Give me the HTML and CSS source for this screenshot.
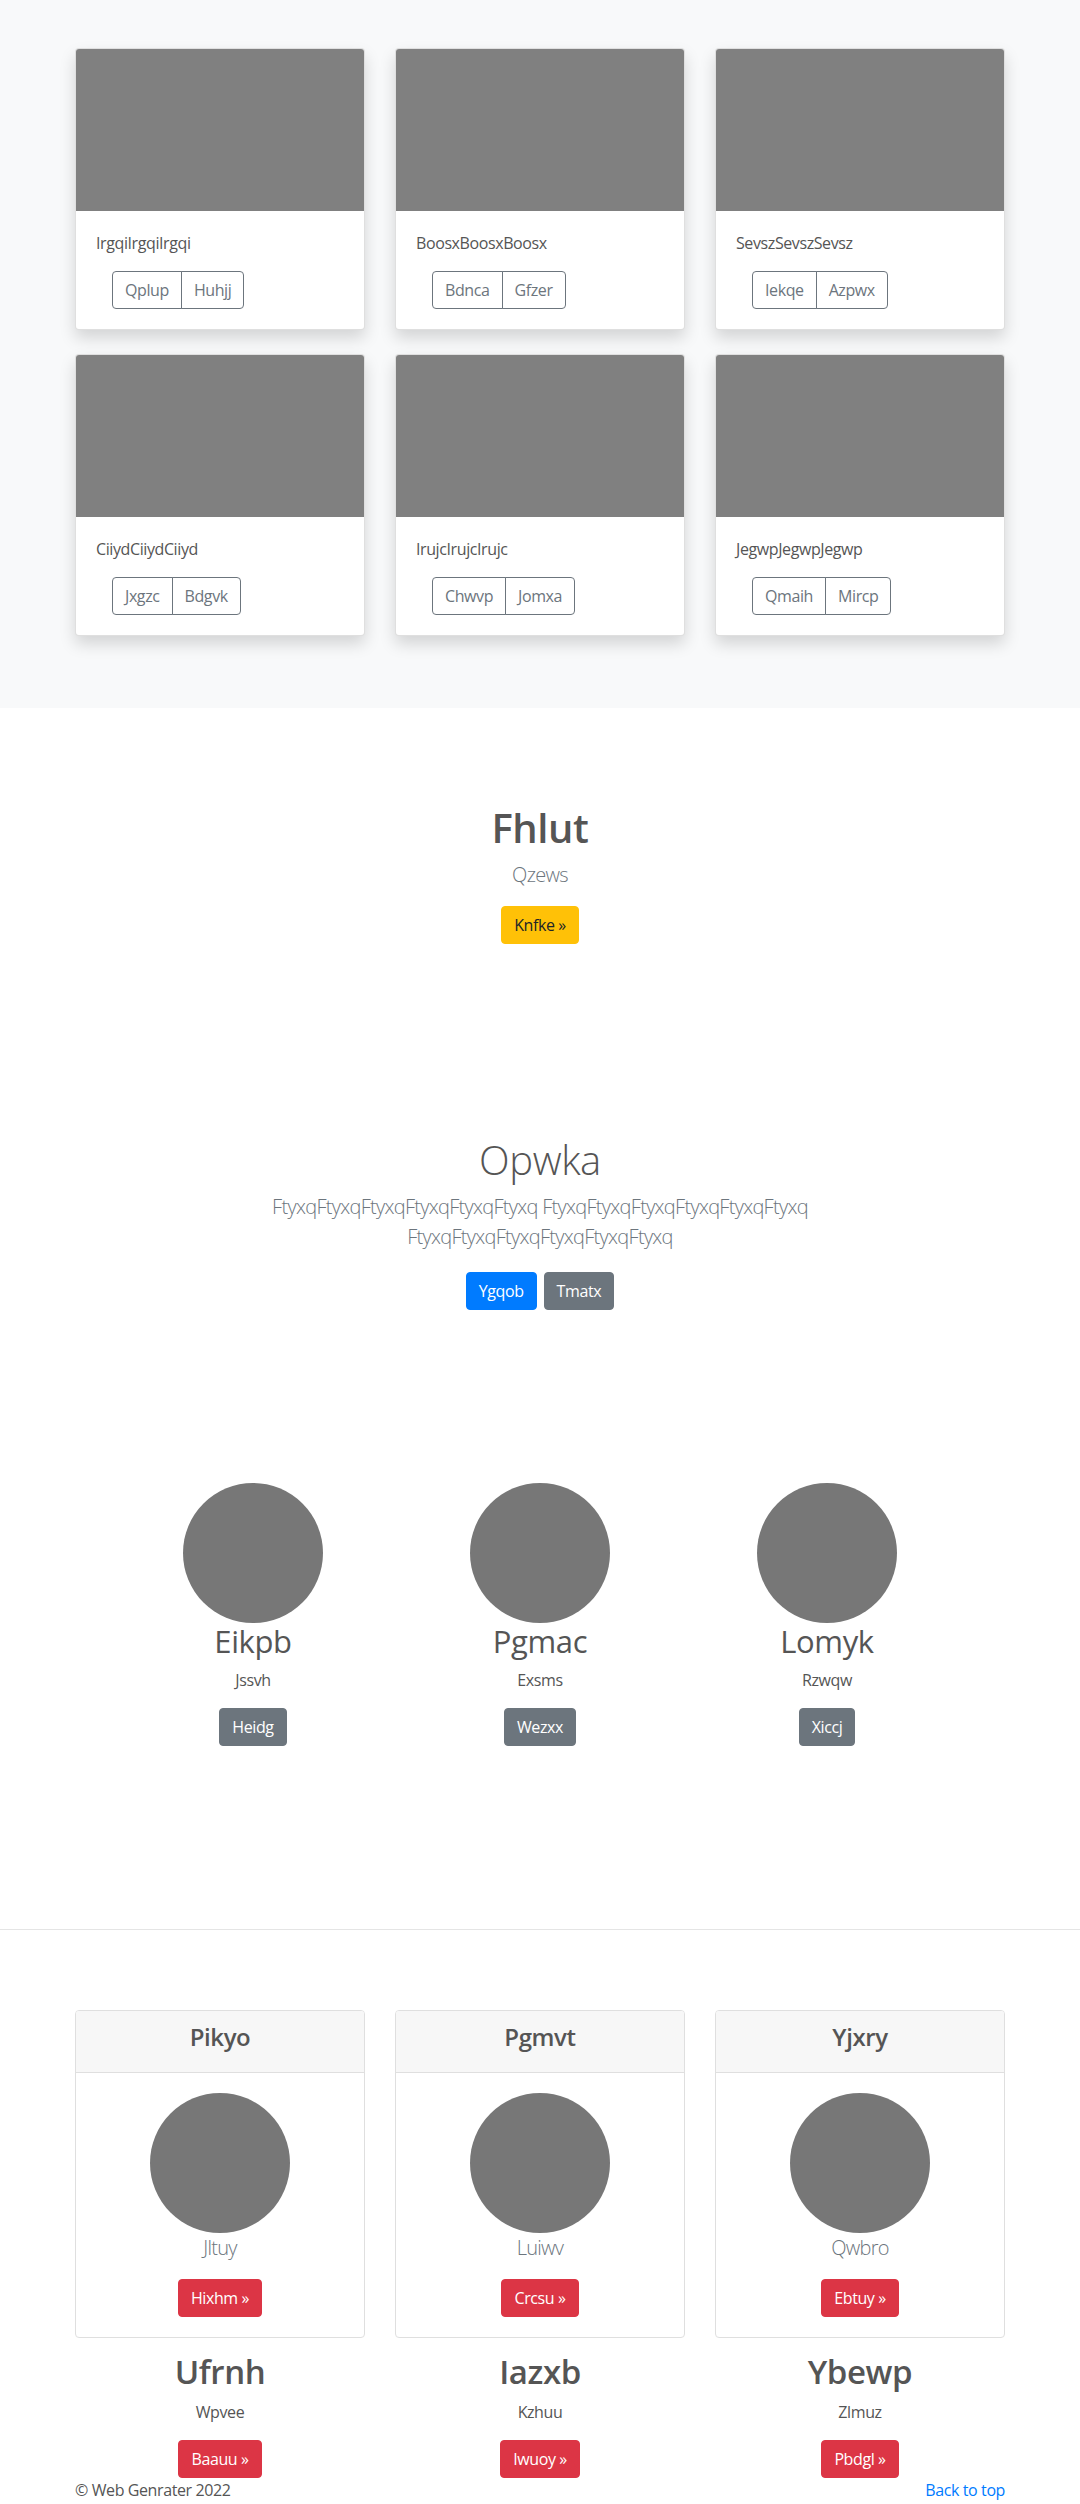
FILE: index.html
```html
<!DOCTYPE html>
<html lang="en">
<head>
<meta charset="utf-8">
<title>Album</title>
<link rel="stylesheet" href="styles.css">
</head>
<body>
<main>
  <section class="album">
    <div class="container">
      <div class="grid3 album-grid">
        <div class="card shadow">
          <div class="card-img"></div>
          <div class="card-body">
            <p class="card-text">IrgqiIrgqiIrgqi</p>
            <div class="btn-group"><a class="btn btn-outline" href="#">Qplup</a><a class="btn btn-outline" href="#">Huhjj</a></div>
          </div>
        </div>
        <div class="card shadow">
          <div class="card-img"></div>
          <div class="card-body">
            <p class="card-text">BoosxBoosxBoosx</p>
            <div class="btn-group"><a class="btn btn-outline" href="#">Bdnca</a><a class="btn btn-outline" href="#">Gfzer</a></div>
          </div>
        </div>
        <div class="card shadow">
          <div class="card-img"></div>
          <div class="card-body">
            <p class="card-text">SevszSevszSevsz</p>
            <div class="btn-group"><a class="btn btn-outline" href="#">Iekqe</a><a class="btn btn-outline" href="#">Azpwx</a></div>
          </div>
        </div>
        <div class="card shadow">
          <div class="card-img"></div>
          <div class="card-body">
            <p class="card-text">CiiydCiiydCiiyd</p>
            <div class="btn-group"><a class="btn btn-outline" href="#">Jxgzc</a><a class="btn btn-outline" href="#">Bdgvk</a></div>
          </div>
        </div>
        <div class="card shadow">
          <div class="card-img"></div>
          <div class="card-body">
            <p class="card-text">IrujcIrujcIrujc</p>
            <div class="btn-group"><a class="btn btn-outline" href="#">Chwvp</a><a class="btn btn-outline" href="#">Jomxa</a></div>
          </div>
        </div>
        <div class="card shadow">
          <div class="card-img"></div>
          <div class="card-body">
            <p class="card-text">JegwpJegwpJegwp</p>
            <div class="btn-group"><a class="btn btn-outline" href="#">Qmaih</a><a class="btn btn-outline" href="#">Mircp</a></div>
          </div>
        </div>
      </div>
    </div>
  </section>

  <section class="hero hero-bold">
    <div class="container">
      <h1>Fhlut</h1>
      <p class="lead">Qzews</p>
      <a class="btn btn-warning" href="#">Knfke »</a>
    </div>
  </section>

  <section class="hero hero-light">
    <div class="container">
      <h1>Opwka</h1>
      <p class="lead lead-wide">FtyxqFtyxqFtyxqFtyxqFtyxqFtyxq FtyxqFtyxqFtyxqFtyxqFtyxqFtyxq FtyxqFtyxqFtyxqFtyxqFtyxqFtyxq</p>
      <div class="actions">
        <a class="btn btn-primary" href="#">Ygqob</a>
        <a class="btn btn-secondary" href="#">Tmatx</a>
      </div>
    </div>
  </section>

  <section class="features">
    <div class="feature">
      <div class="circle"></div>
      <h2>Eikpb</h2>
      <p>Jssvh</p>
      <a class="btn btn-secondary" href="#">Heidg</a>
    </div>
    <div class="feature">
      <div class="circle"></div>
      <h2>Pgmac</h2>
      <p>Exsms</p>
      <a class="btn btn-secondary" href="#">Wezxx</a>
    </div>
    <div class="feature">
      <div class="circle"></div>
      <h2>Lomyk</h2>
      <p>Rzwqw</p>
      <a class="btn btn-secondary" href="#">Xiccj</a>
    </div>
  </section>

  <div class="divider"></div>

  <section class="pricing">
    <div class="container">
      <div class="grid3">
        <div class="pcol">
          <div class="pcard">
            <div class="pcard-header"><h4>Pikyo</h4></div>
            <div class="pcard-body">
              <div class="circle"></div>
              <p class="lead">Jltuy</p>
              <a class="btn btn-danger" href="#">Hixhm »</a>
            </div>
          </div>
          <div class="sub">
            <h2>Ufrnh</h2>
            <p>Wpvee</p>
            <a class="btn btn-danger" href="#">Baauu »</a>
          </div>
        </div>
        <div class="pcol">
          <div class="pcard">
            <div class="pcard-header"><h4>Pgmvt</h4></div>
            <div class="pcard-body">
              <div class="circle"></div>
              <p class="lead">Luiwv</p>
              <a class="btn btn-danger" href="#">Crcsu »</a>
            </div>
          </div>
          <div class="sub">
            <h2>Iazxb</h2>
            <p>Kzhuu</p>
            <a class="btn btn-danger" href="#">Iwuoy »</a>
          </div>
        </div>
        <div class="pcol">
          <div class="pcard">
            <div class="pcard-header"><h4>Yjxry</h4></div>
            <div class="pcard-body">
              <div class="circle"></div>
              <p class="lead">Qwbro</p>
              <a class="btn btn-danger" href="#">Ebtuy »</a>
            </div>
          </div>
          <div class="sub">
            <h2>Ybewp</h2>
            <p>Zlmuz</p>
            <a class="btn btn-danger" href="#">Pbdgl »</a>
          </div>
        </div>
      </div>
    </div>
  </section>
</main>

<footer class="container footer">
  <p>© Web Genrater 2022</p>
  <a href="#">Back to top</a>
</footer>
</body>
</html>
```

FILE: styles.css
```css
* { box-sizing: border-box; }

body {
  margin: 0;
  font-family: "Open Sans", "Noto Sans", sans-serif;
  font-size: 16px;
  line-height: 1.5;
  letter-spacing: -0.025em;
  color: #555;
  background: #fff;
}

h1, h2, h4, p { margin: 0; }

.container {
  width: 960px;
  margin: 0 auto;
  padding: 0 15px;
}

.grid3 {
  display: grid;
  grid-template-columns: repeat(3, 1fr);
  column-gap: 30px;
}

/* Album */
.album {
  background: #f8f9fa;
  padding: 48px 0 72px;
}
.album-grid { row-gap: 24px; }

.card {
  background: #fff;
  border: 1px solid rgba(0, 0, 0, .125);
  border-radius: 4px;
  overflow: hidden;
}
.shadow { box-shadow: 0 .5rem 1rem rgba(0, 0, 0, .15); }
.card-img { height: 162px; background: #808080; }
.card-body { padding: 20px; }
.card-text { margin-bottom: 16px; }

.btn-group {
  display: inline-flex;
  margin-left: 16px;
}

/* Buttons */
.btn {
  display: inline-block;
  font-size: 16px;
  line-height: 24px;
  padding: 6px 12px;
  border: 1px solid transparent;
  border-radius: 4px;
  text-decoration: none;
  white-space: nowrap;
}
.btn-outline {
  color: #6c757d;
  border-color: #6c757d;
  background: transparent;
}
.btn-group .btn:first-child {
  border-top-right-radius: 0;
  border-bottom-right-radius: 0;
}
.btn-group .btn:last-child {
  border-top-left-radius: 0;
  border-bottom-left-radius: 0;
  margin-left: -1px;
}
.btn-warning { background: #ffc107; border-color: #ffc107; color: #212529; }
.btn-primary { background: #007bff; border-color: #007bff; color: #fff; }
.btn-secondary { background: #6c757d; border-color: #6c757d; color: #fff; }
.btn-danger { background: #dc3545; border-color: #dc3545; color: #fff; }

/* Heroes */
.hero {
  text-align: center;
  padding: 96px 0;
}
.hero h1 {
  font-size: 40px;
  line-height: 1.2;
  margin-bottom: 8px;
}
.hero-bold h1 { font-weight: 600; }
.hero-light h1 { font-weight: 300; }
.hero-light { padding-bottom: 173px; }

.lead {
  font-size: 20px;
  font-weight: 300;
  line-height: 30px;
  letter-spacing: -0.035em;
  color: #6c757d;
  margin-bottom: 16px;
}
.lead-wide {
  max-width: 610px;
  margin: 0 auto 16px;
}
.actions {
  display: flex;
  justify-content: center;
  gap: 7px;
  margin-top: 20px;
}

/* Features */
.features {
  display: grid;
  grid-template-columns: repeat(3, 1fr);
  width: 861px;
  margin: 0 auto;
  padding-bottom: 183px;
  text-align: center;
}
.circle {
  width: 140px;
  height: 140px;
  border-radius: 50%;
  background: #777;
  margin: 0 auto;
}
.feature h2 {
  font-size: 31px;
  font-weight: 400;
  line-height: 1.2;
  margin-bottom: 8px;
}
.feature p { margin-bottom: 16px; }

.divider { height: 1px; background: #e5e5e5; }

/* Pricing */
.pricing { padding-top: 80px; }
.pcol { text-align: center; }
.pcard {
  border: 1px solid #dfdfdf;
  border-radius: 4px;
  overflow: hidden;
}
.pcard-header {
  background: #f7f7f7;
  border-bottom: 1px solid #dfdfdf;
  padding: 12px 20px;
}
.pcard-header h4 {
  font-size: 24px;
  font-weight: 600;
  line-height: 1.2;
  margin-bottom: 8px;
}
.pcard-body { padding: 20px; }

.sub { margin-top: 14px; }
.sub h2 {
  font-size: 33px;
  font-weight: 600;
  line-height: 1.2;
  margin-bottom: 8px;
}
.sub p { margin-bottom: 16px; }

/* Footer */
.footer {
  display: flex;
  justify-content: space-between;
}
.footer a {
  color: #007bff;
  text-decoration: none;
}
```
